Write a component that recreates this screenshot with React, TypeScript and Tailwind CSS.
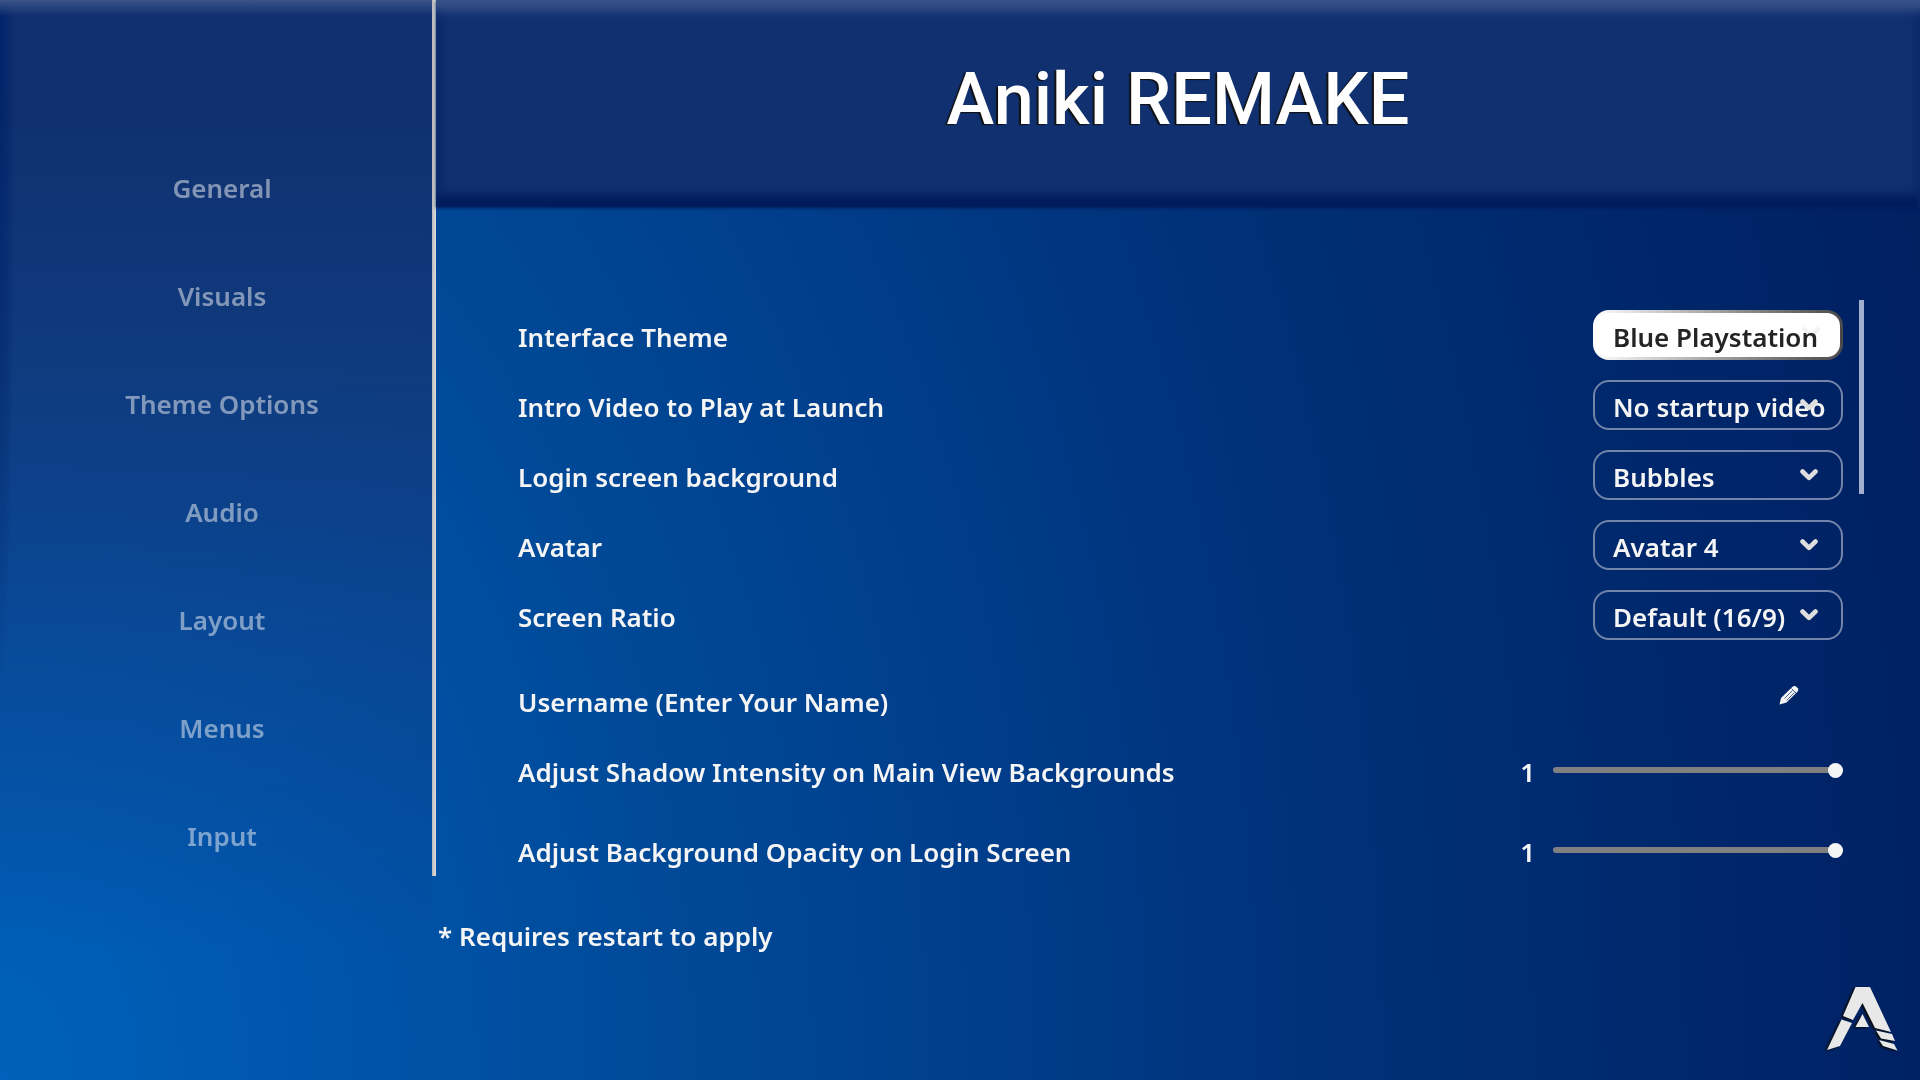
import { useState } from "react";

const sections = ["General", "Visuals", "Theme Options", "Audio", "Layout", "Menus", "Input"];

const choices = [
  { id: "theme", label: "Interface Theme", value: "Blue Playstation", active: true },
  { id: "intro", label: "Intro Video to Play at Launch", value: "No startup video", active: false },
  { id: "login", label: "Login screen background", value: "Bubbles", active: false },
  { id: "avatar", label: "Avatar", value: "Avatar 4", active: false },
  { id: "ratio", label: "Screen Ratio", value: "Default (16/9)", active: false },
];

function Chevron() {
  return (
    <svg
      aria-hidden="true"
      viewBox="0 0 18 12"
      className="pointer-events-none absolute top-[17px] right-[23px] h-3 w-[18px]"
      fill="none"
      stroke="#dedede"
      strokeWidth="4.6"
      strokeLinecap="round"
      strokeLinejoin="round"
    >
      <path d="M2.500 2.500 9 8.800l6.500-6.300" />
    </svg>
  );
}

function Choice({ id, label, value, active }: (typeof choices)[number]) {
  return (
    <div className="flex h-[70px] items-center justify-between">
      <label htmlFor={id} className="pt-1">{label}</label>
      <div
        className={
          active
            ? "relative h-[50px] w-[250px] rounded-2xl bg-linear-to-r from-white to-[#4a4a4a] p-[3px]"
            : "relative h-[50px] w-[250px] rounded-2xl border-2 border-[#7384ab]"
        }
      >
        <select
          id={id}
          className={
            active
              ? "block h-full w-full appearance-none rounded-[13px] bg-white pt-1 pl-[17px] text-[#242424] outline-none"
              : "block h-full w-full appearance-none bg-transparent pt-1 pl-[18px] text-[#f5f5f5] outline-none"
          }
        >
          <option>{value}</option>
        </select>
        <span className={active ? "opacity-40 mix-blend-multiply" : ""}>
          <Chevron />
        </span>
      </div>
    </div>
  );
}

function Level({ id, label }: { id: string; label: string }) {
  const [level, setLevel] = useState(1);
  return (
    <div className="flex h-20 items-center">
      <label htmlFor={id} className="flex-1 pt-1">{label}</label>
      <output htmlFor={id} className="mr-[18px] pt-1">{level}</output>
      <input
        id={id}
        type="range"
        min="0"
        max="1"
        step="0.1"
        value={level}
        onChange={(e) => setLevel(Number(e.target.value))}
        className="h-4 w-[290px] appearance-none bg-transparent [&::-webkit-slider-runnable-track]:h-1.5 [&::-webkit-slider-runnable-track]:rounded-full [&::-webkit-slider-runnable-track]:bg-[#808080] [&::-webkit-slider-thumb]:-mt-1 [&::-webkit-slider-thumb]:size-[15px] [&::-webkit-slider-thumb]:appearance-none [&::-webkit-slider-thumb]:rounded-full [&::-webkit-slider-thumb]:bg-[#f5f5f5]"
      />
    </div>
  );
}

function Pencil() {
  return (
    <svg aria-hidden="true" viewBox="0 0 20 20" className="size-5">
      <path d="M.5 19.500 2 13 13.500 1.700Q15 .3 16.800 1.300l2 2q1.200 1.700-.2 3.200L7.500 17.500Z" fill="#f5f5f5" />
      <path d="m12.500 3.500 4.500 4.500M5.500 13.500l8-8M7.500 15.500l8-8" stroke="#00276b" strokeWidth=".7" />
    </svg>
  );
}

function Logo() {
  return (
    <svg
      role="img"
      aria-label="Aniki"
      viewBox="0 0 72 66"
      className="h-[66px] w-[72px] drop-shadow-[-2px_1px_1px_#0b0b0b]"
      fill="#e8e8e8"
    >
      <path d="M29.500 1H44L65 46 49 42 36.500 17 27 34 17 30Z" />
      <path d="m15.500 33.500 10.500 3.500L14 60 1 64Z" />
      <path d="m36.500 28 6.500 13H29.500Z" />
      <path d="m50 44.500 16 3.500 3 7-14-2.500Z" />
      <path d="m53 54 15 4 3.500 6.500L57 60Z" />
    </svg>
  );
}

export default function App() {
  return (
    <div className="flex min-h-screen bg-[radial-gradient(ellipse_2080px_3100px_at_0%_100%,#0061ba_0%,#0053a9_18%,#004997_33%,#003d8a_48%,#003178_64%,#00266a_84%,#002062_96%)] font-['Noto_Sans',sans-serif] text-[26px] leading-9 font-semibold text-[#f5f5f5]">
      <aside className="w-[432px] shrink-0 bg-[linear-gradient(to_bottom,#3b5489,transparent_16px),radial-gradient(ellipse_16px_700px_at_0_0,#00246a,transparent),linear-gradient(to_bottom,#10306f_10%,#103a7dee_35%,#10408a88_60%,transparent_88%)]">
        <nav className="flex flex-col items-center gap-[72px] pt-[170px] pl-3">
          {sections.map((name) => (
            <button key={name} type="button" className="text-[#f5f5f5]/50">{name}</button>
          ))}
        </nav>
      </aside>
      <div className="h-[876px] w-1 shrink-0 bg-linear-to-r from-[#bbb] to-[#ddd]" />
      <main className="flex min-w-0 flex-1 flex-col">
        <header className="flex h-[207px] items-center justify-center bg-[#10306f] shadow-[0_1px_3px_#001c5c,inset_0_16px_12px_-6px_#3b5489,inset_0_-14px_8px_-2px_#001c5c,inset_0_0_12px_#00246a]">
          <h1 className="pb-2 font-['Roboto',sans-serif] text-[72px] font-medium text-white [text-shadow:-2px_1px_1px_#111]">Aniki REMAKE</h1>
        </header>
        <div className="mt-[93px] mr-14 flex">
          <section className="flex-1 pl-[82px]">
            {choices.map((c) => (
              <Choice key={c.id} {...c} />
            ))}
            <div className="mt-[10px] flex h-[70px] items-center justify-between">
              <span className="pt-3.5">Username (Enter Your Name)</span>
              <button type="button" aria-label="Edit username" className="mr-11"><Pencil /></button>
            </div>
            <Level id="shadow" label="Adjust Shadow Intensity on Main View Backgrounds" />
            <Level id="opacity" label="Adjust Background Opacity on Login Screen" />
          </section>
          <div className="ml-4 h-[194px] w-[5px] bg-[#a3afcf]" />
        </div>
        <p className="mt-7 pl-0.5">* Requires restart to apply</p>
        <div className="mt-8 flex justify-end pr-[22px]">
          <Logo />
        </div>
      </main>
    </div>
  );
}
